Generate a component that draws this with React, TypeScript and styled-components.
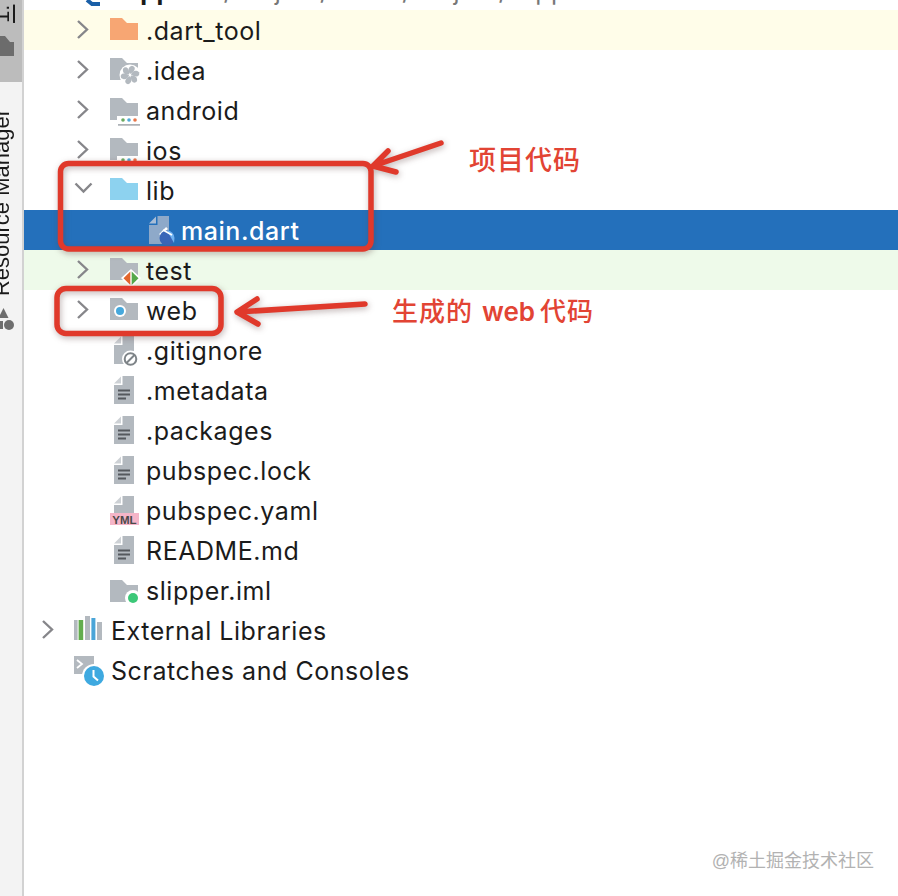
import React from 'react';
import styled, { createGlobalStyle } from 'styled-components';

const GlobalStyle = createGlobalStyle`
  html, body {
    margin: 0;
    padding: 0;
    background: #ffffff;
    overflow: hidden;
  }
`;

const Page = styled.div`
  position: relative;
  display: flex;
  width: 898px;
  height: 896px;
  overflow: hidden;
  background: #ffffff;
`;

const Sidebar = styled.div`
  display: flex;
  flex-direction: column;
  flex: none;
  box-sizing: border-box;
  width: 24px;
  height: 100%;
  overflow: hidden;
  background: #f3f3f3;
  border-right: 2px solid #d2d2d2;
`;

const ProjectTab = styled.div`
  display: flex;
  flex-direction: column;
  flex: none;
  height: 82px;
  overflow: hidden;
  justify-content: flex-end;
  background: #bcbcbc;
`;

const TabLabel = styled.div`
  flex: none;
  writing-mode: vertical-rl;
  transform: rotate(180deg);
  width: 22px;
  margin-left: -9px;
  font-family: 'Liberation Sans', Arial, sans-serif;
  font-size: 22px;
  line-height: 22px;
  white-space: nowrap;
  color: #1a1a1a;
`;

const TabFolder = styled.svg`
  display: block;
  flex: none;
  width: 14px;
  height: 20px;
  margin: 13px 0 26px;
`;

const ResourceTab = styled.div`
  display: flex;
  flex-direction: column;
  padding-top: 27px;
`;

const ResourceIcon = styled.svg`
  display: block;
  flex: none;
  width: 16px;
  height: 26px;
  margin-top: 12px;
  overflow: visible;
`;

const Tree = styled.div`
  flex: 1;
  display: flex;
  flex-direction: column;
  min-width: 0;
`;

const ClippedTop = styled.div`
  flex: none;
  height: 10px;
  display: flex;
  flex-direction: column;
  justify-content: flex-end;
  overflow: hidden;
`;

const toneColors = { changed: '#fffde9', selected: '#2470bb', added: '#eefaea' };

const Row = styled.div<{ $depth: number; $tone?: keyof typeof toneColors }>`
  flex: none;
  display: flex;
  align-items: center;
  height: 40px;
  padding-left: ${p => p.$depth * 35 + 12}px;
  background: ${p => (p.$tone ? toneColors[p.$tone] : 'transparent')};
`;

const ChevronSlot = styled.div`
  flex: none;
  width: 35px;
  height: 40px;
`;

const IconSlot = styled.div`
  flex: none;
  width: 40px;
  height: 40px;
`;

const IconSvg = styled.svg`
  display: block;
  width: 100%;
  height: 100%;
  overflow: visible;
`;

const YamlText = styled.text`
  font-family: 'Liberation Sans', Arial, sans-serif;
  font-size: 11.5px;
  font-weight: 700;
  fill: #4a4a4a;
  text-anchor: middle;
`;

const Label = styled.span<{ $selected?: boolean }>`
  padding-top: 2px;
  font-family: Inter, 'Liberation Sans', Arial, sans-serif;
  font-size: 25px;
  letter-spacing: 0.55px;
  white-space: nowrap;
  color: ${p => (p.$selected ? '#ffffff' : '#1b1b1b')};
  font-weight: ${p => (p.$selected ? 500 : 400)};
`;

const ProjectName = styled.span`
  font-weight: 700;
`;

const ProjectPath = styled.span`
  color: #777777;
`;

const Markup = styled.svg`
  position: absolute;
  inset: 0;
  width: 898px;
  height: 896px;
  filter: drop-shadow(1px 2px 3px rgba(90, 60, 60, 0.4));
  pointer-events: none;
`;

const Note = styled.div<{ $left: number; $top: number; $size: number }>`
  position: absolute;
  left: ${p => p.$left}px;
  top: ${p => p.$top}px;
  font-family: Inter, 'Noto Sans CJK SC', sans-serif;
  font-size: ${p => p.$size}px;
  font-weight: 500;
  letter-spacing: 1px;
  line-height: 38px;
  white-space: nowrap;
  color: #e24434;
`;

const NoteLatin = styled.span`
  margin: 0 5px 0 9px;
  letter-spacing: 0;
  font-weight: 600;
`;

const Watermark = styled.div`
  position: absolute;
  right: 24px;
  bottom: 24px;
  font-family: 'Liberation Sans', 'Noto Sans CJK SC', sans-serif;
  font-size: 18px;
  line-height: 22px;
  white-space: nowrap;
  color: #b2b2b2;
`;

const GRAY = '#b3b9bf';
const FOLDER = 'M4 8H16L21 13H32V30H4Z';

const Folder = ({ color = GRAY, children }: { color?: string; children?: React.ReactNode }) => (
  <IconSvg viewBox="0 0 40 40">
    <path d={FOLDER} fill={color} />
    {children}
  </IconSvg>
);

const Doc = ({ color = GRAY, fold = '#cdd1d5', children }: { color?: string; fold?: string; children?: React.ReactNode }) => (
  <IconSvg viewBox="0 0 40 40">
    <path d="M16.5 6H28V34H8V15H16.5Z" fill={color} />
    <path d="M8 13.5L15 6.5V13.5Z" fill={fold} />
    {children}
  </IconSvg>
);

const TextLines = () => (
  <g fill="#55595e">
    <rect x="12" y="19.5" width="12" height="2" />
    <rect x="12" y="23.5" width="12" height="2" />
    <rect x="12" y="27.5" width="8" height="2" />
  </g>
);

const ModuleDots = () => (
  <>
    <rect x="11" y="26" width="26" height="12" fill="#ffffff" />
    <circle cx="17" cy="30" r="1.8" fill="#6aaa5f" />
    <circle cx="23" cy="30" r="1.8" fill="#4faad8" />
    <circle cx="29" cy="30" r="1.8" fill="#e8764a" />
    <rect x="12" y="34.2" width="22" height="1.4" fill="#9aa0a6" />
  </>
);

const Pinwheel = () => (
  <g>
    <circle cx="24" cy="25" r="10.5" fill="#ffffff" />
    {[0, 60, 120, 180, 240, 300].map(a => (
      <path
        key={a}
        d="M24 24C21.5 21 22 17 26 15.8C30 16.5 30 21 24 24Z"
        fill={GRAY}
        transform={`rotate(${a} 24 25)`}
      />
    ))}
  </g>
);

const IdeaIcon = () => <Folder><Pinwheel /></Folder>;

const TestBadge = () => (
  <g>
    <path d="M25 19L35 28L25 38L15 28Z" fill="#ffffff" />
    <path d="M24.3 21.5V35L17.5 28.2Z" fill="#e2652b" />
    <path d="M25.7 21.5V35L32.5 28.2Z" fill="#55a84a" />
  </g>
);

const DartBadge = () => (
  <g>
    <path d="M19 25L26 18" stroke="#ffffff" strokeWidth="2.5" fill="none" />
    <circle cx="26" cy="28" r="7.5" fill="#3a66b8" />
    <path d="M26 20.5A7.5 7.5 0 0 1 33.5 28L33 33Z" fill="#6fb3f2" />
    <path d="M22 20L31 25" stroke="#ffffff" strokeWidth="1.6" />
  </g>
);

const LibrariesIcon = () => (
  <IconSvg viewBox="0 0 40 40">
    <rect x="3" y="10" width="3.6" height="20" fill={GRAY} />
    <rect x="7.6" y="10" width="4.6" height="20" fill="#62ad4e" />
    <rect x="14" y="6" width="5" height="24" fill={GRAY} />
    <rect x="20.4" y="8" width="4" height="22" fill="#4aa5d8" />
    <rect x="26" y="12" width="5" height="18" fill={GRAY} />
  </IconSvg>
);

const ScratchIcon = () => (
  <IconSvg viewBox="0 0 40 40">
    <rect x="3" y="6" width="20" height="18" fill={GRAY} />
    <path d="M6 10L11 14L6 18" stroke="#ffffff" strokeWidth="1.8" fill="none" />
    <circle cx="23" cy="26" r="12" fill="#ffffff" />
    <circle cx="23" cy="26" r="10" fill="#3ea9e0" />
    <path d="M22.5 20V26.5L27 30.5" stroke="#ffffff" strokeWidth="2" fill="none" />
  </IconSvg>
);

const YamlIcon = () => (
  <Doc>
    <rect x="4" y="23" width="29" height="12" fill="#f5b5c8" />
    <YamlText x="18.5" y="33.5">YML</YamlText>
  </Doc>
);

type Item = {
  name: string;
  depth: number;
  chevron?: 'closed' | 'open';
  tone?: 'changed' | 'selected' | 'added';
  icon: React.ReactNode;
};

const items: Item[] = [
  { name: '.dart_tool', depth: 1, chevron: 'closed', tone: 'changed', icon: <Folder color="#f7a673" /> },
  { name: '.idea', depth: 1, chevron: 'closed', icon: <IdeaIcon /> },
  { name: 'android', depth: 1, chevron: 'closed', icon: <Folder><ModuleDots /></Folder> },
  { name: 'ios', depth: 1, chevron: 'closed', icon: <Folder><ModuleDots /></Folder> },
  { name: 'lib', depth: 1, chevron: 'open', icon: <Folder color="#8dd2ef" /> },
  { name: 'main.dart', depth: 2, tone: 'selected', icon: <Doc color="#8ea9c9" fold="#a9bdd6"><DartBadge /></Doc> },
  { name: 'test', depth: 1, chevron: 'closed', tone: 'added', icon: <Folder><TestBadge /></Folder> },
  {
    name: 'web',
    depth: 1,
    chevron: 'closed',
    icon: (
      <Folder>
        <circle cx="14" cy="21" r="6" fill="#ffffff" />
        <circle cx="14" cy="21" r="4" fill="#46a8dc" />
      </Folder>
    ),
  },
  {
    name: '.gitignore',
    depth: 1,
    icon: (
      <Doc>
        <circle cx="24.5" cy="29" r="8.5" fill="#ffffff" />
        <circle cx="24.5" cy="29" r="5.8" fill="none" stroke="#7e8488" strokeWidth="2" />
        <path d="M20.5 33L28.5 25" stroke="#7e8488" strokeWidth="2" />
      </Doc>
    ),
  },
  { name: '.metadata', depth: 1, icon: <Doc><TextLines /></Doc> },
  { name: '.packages', depth: 1, icon: <Doc><TextLines /></Doc> },
  { name: 'pubspec.lock', depth: 1, icon: <Doc><TextLines /></Doc> },
  { name: 'pubspec.yaml', depth: 1, icon: <YamlIcon /> },
  { name: 'README.md', depth: 1, icon: <Doc><TextLines /></Doc> },
  {
    name: 'slipper.iml',
    depth: 1,
    icon: (
      <IconSvg viewBox="0 0 40 40">
        <path d="M4 10H16L21 15H32V32H4Z" fill={GRAY} />
        <circle cx="27" cy="28" r="8" fill="#ffffff" />
        <circle cx="27" cy="28" r="5" fill="#3cc878" />
      </IconSvg>
    ),
  },
  { name: 'External Libraries', depth: 0, chevron: 'closed', icon: <LibrariesIcon /> },
  { name: 'Scratches and Consoles', depth: 0, icon: <ScratchIcon /> },
];

const Chevron = ({ open }: { open: boolean }) => (
  <IconSvg viewBox="0 0 35 40">
    <path
      d={open ? 'M4.5 13.5L12.5 21.5L20.5 13.5' : 'M7 11L16 19.5L7 28'}
      stroke="#86868a"
      strokeWidth="2.4"
      fill="none"
    />
  </IconSvg>
);

const App = () => {
  return (
    <>
      <GlobalStyle />
      <Page>
        <Sidebar>
          <ProjectTab>
            <TabLabel><u>1:</u> Project</TabLabel>
            <TabFolder viewBox="0 0 14 20">
              <path d="M0 0H5L10 6H14V20H0Z" fill="#6c6c6c" />
            </TabFolder>
          </ProjectTab>
          <ResourceTab>
            <TabLabel>Resource Manager</TabLabel>
            <ResourceIcon viewBox="0 0 16 26">
              <path d="M3.5 0L8.5 10H-1.5Z" fill="#6e6e6e" />
              <rect x="-1" y="13" width="4" height="8" fill="#6e6e6e" />
              <circle cx="9" cy="17" r="5" fill="#6e6e6e" />
            </ResourceIcon>
          </ResourceTab>
        </Sidebar>
        <Tree>
          <ClippedTop>
            <Row $depth={0}>
              <ChevronSlot />
              <IconSlot>
                <IconSvg viewBox="0 0 40 40">
                  <path d="M16 30L21 34H29" stroke="#1a5fa8" strokeWidth="4" fill="none" />
                </IconSvg>
              </IconSlot>
              <Label>
                <ProjectName>slipper</ProjectName>
                <ProjectPath> ~/Project/flutter/Project/slipper</ProjectPath>
              </Label>
            </Row>
          </ClippedTop>
          {items.map(item => (
            <Row key={item.name} $depth={item.depth} $tone={item.tone}>
              <ChevronSlot>
                {item.chevron && <Chevron open={item.chevron === 'open'} />}
              </ChevronSlot>
              <IconSlot>{item.icon}</IconSlot>
              <Label $selected={item.tone === 'selected'}>{item.name}</Label>
            </Row>
          ))}
        </Tree>
        <Markup viewBox="0 0 898 896">
          <g fill="none" stroke="#e0392b" strokeWidth="5.5" strokeLinecap="round" strokeLinejoin="round">
            <rect x="60.5" y="163.5" width="310.5" height="85.5" rx="8" />
            <rect x="57" y="288.5" width="164" height="45" rx="9" />
            <path d="M441 143L373 166M388 151L373 166L396 172" />
            <path d="M365 304L237 312M257 299L237 312L258 324" />
          </g>
        </Markup>
        <Note $left={469} $top={142} $size={27}>项目代码</Note>
        <Note $left={392} $top={293} $size={26}>生成的<NoteLatin>web</NoteLatin>代码</Note>
        <Watermark>@稀土掘金技术社区</Watermark>
      </Page>
    </>
  );
};

export default App;
